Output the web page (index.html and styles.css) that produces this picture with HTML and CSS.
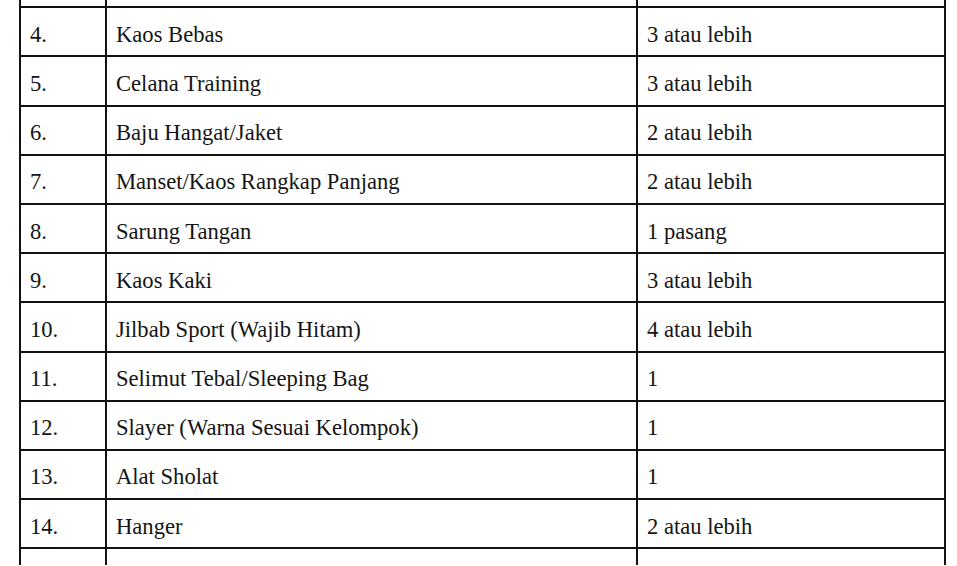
FILE: index.html
```html
<!DOCTYPE html>
<html lang="id">
<head>
<meta charset="utf-8">
<title>Daftar Perlengkapan</title>
<link rel="stylesheet" href="styles.css">
</head>
<body>
<div class="sheet">
  <div class="cell"></div><div class="cell"></div><div class="cell"></div>
  <div class="cell">4.</div><div class="cell">Kaos Bebas</div><div class="cell">3 atau lebih</div>
  <div class="cell">5.</div><div class="cell">Celana Training</div><div class="cell">3 atau lebih</div>
  <div class="cell">6.</div><div class="cell">Baju Hangat/Jaket</div><div class="cell">2 atau lebih</div>
  <div class="cell">7.</div><div class="cell">Manset/Kaos Rangkap Panjang</div><div class="cell">2 atau lebih</div>
  <div class="cell">8.</div><div class="cell">Sarung Tangan</div><div class="cell">1 pasang</div>
  <div class="cell">9.</div><div class="cell">Kaos Kaki</div><div class="cell">3 atau lebih</div>
  <div class="cell">10.</div><div class="cell">Jilbab Sport (Wajib Hitam)</div><div class="cell">4 atau lebih</div>
  <div class="cell">11.</div><div class="cell">Selimut Tebal/Sleeping Bag</div><div class="cell">1</div>
  <div class="cell">12.</div><div class="cell">Slayer (Warna Sesuai Kelompok)</div><div class="cell">1</div>
  <div class="cell">13.</div><div class="cell">Alat Sholat</div><div class="cell">1</div>
  <div class="cell">14.</div><div class="cell">Hanger</div><div class="cell">2 atau lebih</div>
  <div class="cell"></div><div class="cell"></div><div class="cell"></div>
</div>
</body>
</html>
```

FILE: styles.css
```css
html, body {
  margin: 0;
  padding: 0;
  background: #ffffff;
  overflow: hidden;
}

body {
  width: 957px;
  height: 566px;
  font-family: "Liberation Serif", "Times New Roman", serif;
  color: #141414;
}

.sheet {
  display: grid;
  grid-template-columns: 86px 531px 308px;
  grid-template-rows: repeat(13, 49.2px);
  margin-top: -40.9px;
  margin-left: 19px;
  border-left: 2px solid #111;
  width: max-content;
  height: 606px;
  overflow: hidden;
}

.cell {
  box-sizing: border-box;
  border-right: 2px solid #111;
  border-bottom: 2px solid #111;
  padding: 13.5px 0 0 9px;
  font-size: 22.6px;
  line-height: 25px;
  white-space: nowrap;
  overflow: hidden;
}
```
